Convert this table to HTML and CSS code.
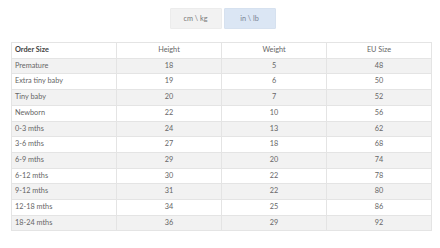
FILE: index.html
```html
<!DOCTYPE html>
<html>
<head>
<meta charset="utf-8">
<link rel="stylesheet" href="styles.css">
</head>
<body>
<div class="page">
  <div class="units">
    <button class="unit">cm \ kg</button>
    <button class="unit active">in \ lb</button>
  </div>
  <table class="sizes">
    <thead>
      <tr><th class="first">Order Size</th><th>Height</th><th>Weight</th><th>EU Size</th></tr>
    </thead>
    <tbody>
      <tr><td class="first">Premature</td><td>18</td><td>5</td><td>48</td></tr>
      <tr><td class="first">Extra tiny baby</td><td>19</td><td>6</td><td>50</td></tr>
      <tr><td class="first">Tiny baby</td><td>20</td><td>7</td><td>52</td></tr>
      <tr><td class="first">Newborn</td><td>22</td><td>10</td><td>56</td></tr>
      <tr><td class="first">0-3 mths</td><td>24</td><td>13</td><td>62</td></tr>
      <tr><td class="first">3-6 mths</td><td>27</td><td>18</td><td>68</td></tr>
      <tr><td class="first">6-9 mths</td><td>29</td><td>20</td><td>74</td></tr>
      <tr><td class="first">6-12 mths</td><td>30</td><td>22</td><td>78</td></tr>
      <tr><td class="first">9-12 mths</td><td>31</td><td>22</td><td>80</td></tr>
      <tr><td class="first">12-18 mths</td><td>34</td><td>25</td><td>86</td></tr>
      <tr><td class="first">18-24 mths</td><td>36</td><td>29</td><td>92</td></tr>
    </tbody>
  </table>
</div>
</body>
</html>
```
FILE: styles.css
```css
html, body {
  margin: 0;
  padding: 0;
  background: #ffffff;
}
body {
  font-family: "Lato", "Liberation Sans", sans-serif;
  font-size: 7.3px;
  color: #666;
}
.page {
  padding: 8px 8px 0 11px;
}
.units {
  display: flex;
  justify-content: center;
  gap: 2px;
  padding-left: 2px;
}
.unit {
  width: 52px;
  height: 21px;
  border: 1px solid #ececec;
  background: #f2f2f2;
  color: #777;
  font-family: "Lato", "Liberation Sans", sans-serif;
  font-size: 7.3px;
  padding: 0;
  border-radius: 1px;
}
.unit.active {
  background: #dbe6f4;
  border-color: #d6e1ef;
  color: #7a8494;
}
.sizes {
  margin-top: 13px;
  width: 421px;
  border-collapse: collapse;
  table-layout: fixed;
}
.sizes th, .sizes td {
  border: 1px solid #e4e4e4;
  height: 14.7px;
  padding: 0 3px;
  line-height: 14.7px;
  text-align: center;
  font-weight: normal;
  color: #666;
  white-space: nowrap;
}
.sizes th.first, .sizes td.first {
  text-align: left;
}
.sizes th.first {
  font-weight: bold;
  color: #444;
}
.sizes tbody tr:nth-child(odd) {
  background: #f2f2f2;
}
```
